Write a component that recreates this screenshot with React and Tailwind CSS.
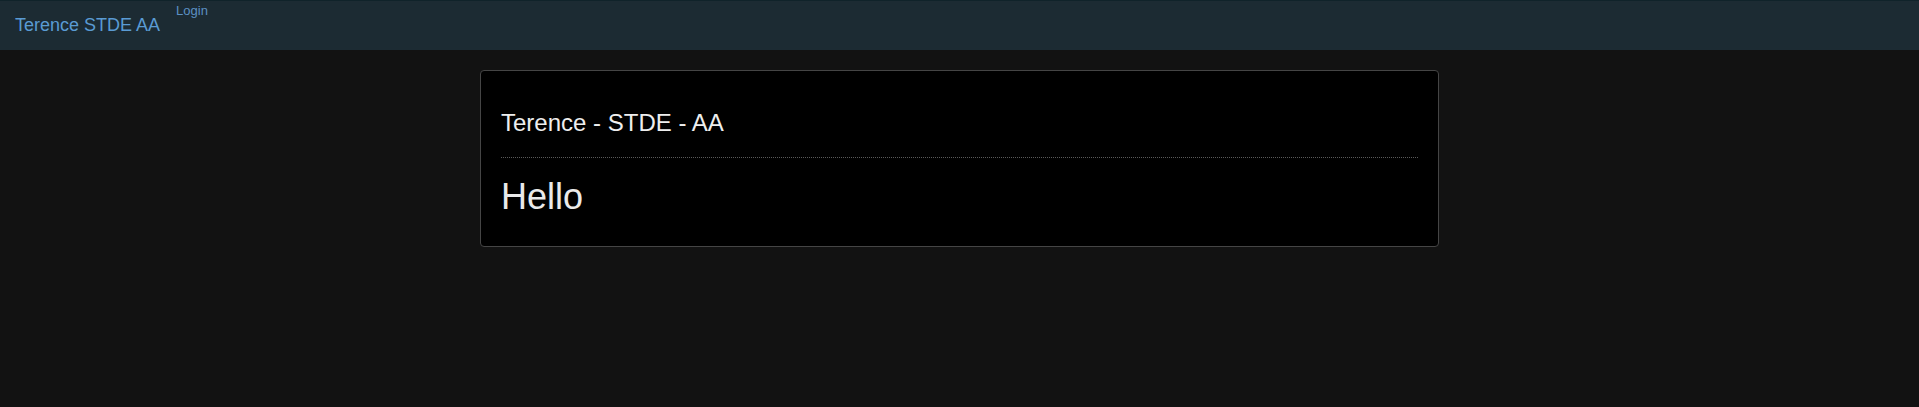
export default function App() {
    return (
        <div className="min-h-[407px] bg-[#121212]" style={{ fontFamily: '"Liberation Sans", Arial, sans-serif' }}>
            <nav className="h-[50px] bg-[#1c2b33] border-t border-[#10232a] flex items-start px-[15px]">
                <a className="text-[18px] leading-none pt-[15px] text-[#5a9bd3]">Terence STDE AA</a>
                <a className="text-[13px] leading-none pt-[3px] ml-[16px] text-[#5b90c2]">Login</a>
            </nav>
            <div className="pt-[20px]">
                <div className="w-[959px] mx-auto bg-black border border-[#454545] rounded-[4px] px-[20px] pt-[40px] pb-[31px]">
                    <h2 className="text-[24px] leading-none text-[#eeeeee]">Terence - STDE - AA</h2>
                    <hr className="mt-[22px] mb-[21px] border-0 border-t border-dotted border-[#5a5a5a]" />
                    <h1 className="text-[36px] leading-none text-[#eaeaea]">Hello</h1>
                </div>
            </div>
        </div>
    );
}
